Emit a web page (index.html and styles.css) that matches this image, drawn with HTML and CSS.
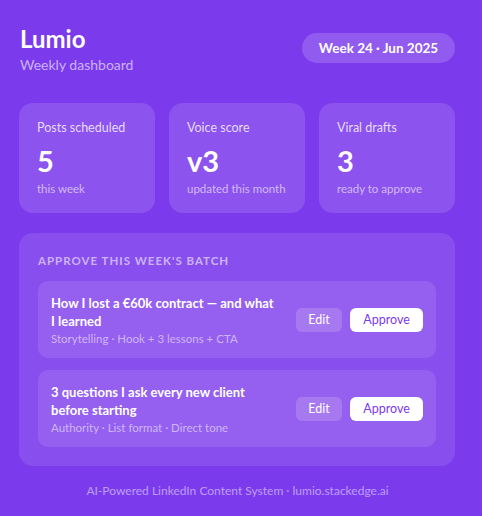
FILE: index.html
```html
<!DOCTYPE html>
<html lang="en">
<head>
<meta charset="utf-8">
<title>Lumio — Weekly dashboard</title>
<link rel="stylesheet" href="styles.css">
</head>
<body>
<main class="page">
  <header class="top">
    <div class="brand">
      <h1 class="brand-name">Lumio</h1>
      <p class="brand-sub">Weekly dashboard</p>
    </div>
    <span class="week-pill">Week 24 · Jun 2025</span>
  </header>

  <section class="stats">
    <div class="stat">
      <div class="stat-label">Posts scheduled</div>
      <div class="stat-value">5</div>
      <div class="stat-note">this week</div>
    </div>
    <div class="stat">
      <div class="stat-label">Voice score</div>
      <div class="stat-value">v3</div>
      <div class="stat-note">updated this month</div>
    </div>
    <div class="stat">
      <div class="stat-label">Viral drafts</div>
      <div class="stat-value">3</div>
      <div class="stat-note">ready to approve</div>
    </div>
  </section>

  <section class="batch">
    <h2 class="batch-title">Approve this week's batch</h2>
    <div class="post">
      <div class="post-text">
        <div class="post-title">How I lost a €60k contract — and what I learned</div>
        <div class="post-meta">Storytelling · Hook + 3 lessons + CTA</div>
      </div>
      <div class="post-actions">
        <button class="btn btn-edit">Edit</button>
        <button class="btn btn-approve">Approve</button>
      </div>
    </div>
    <div class="post">
      <div class="post-text">
        <div class="post-title">3 questions I ask every new client before starting</div>
        <div class="post-meta">Authority · List format · Direct tone</div>
      </div>
      <div class="post-actions">
        <button class="btn btn-edit">Edit</button>
        <button class="btn btn-approve">Approve</button>
      </div>
    </div>
  </section>

  <footer class="foot">AI-Powered LinkedIn Content System · lumio.stackedge.ai</footer>
</main>
</body>
</html>
```
FILE: styles.css
```css
* { box-sizing: border-box; }

html, body {
  margin: 0;
  height: 100%;
}

body {
  background: #7c3aed;
  color: #fff;
  font-family: "Lato", "Noto Sans", sans-serif;
}

.page {
  padding: 24px 27px 0 20px;
  width: 482px;
}

.top {
  display: flex;
  justify-content: space-between;
  align-items: flex-start;
}

.brand-name {
  margin: 0;
  font-size: 24px;
  line-height: 30px;
  font-weight: 700;
}

.brand-sub {
  margin: 2px 0 0;
  font-size: 14px;
  line-height: 18px;
  color: rgba(255, 255, 255, 0.62);
}

.week-pill {
  margin-top: 9px;
  height: 30px;
  width: 153px;
  justify-content: center;
  display: inline-flex;
  align-items: center;
  border-radius: 15px;
  background: rgba(255, 255, 255, 0.17);
  font-size: 13.5px;
  font-weight: 700;
}

.stats {
  margin-top: 29px;
  display: grid;
  grid-template-columns: repeat(3, 1fr);
  gap: 14px;
  margin-left: -1px;
}

.stat {
  height: 110px;
  border-radius: 14px;
  background: rgba(255, 255, 255, 0.13);
  padding: 17px 18px;
}

.stat-label {
  font-size: 12.5px;
  line-height: 16px;
  color: rgba(255, 255, 255, 0.8);
}

.stat-value {
  margin-top: 7px;
  font-size: 29px;
  line-height: 36px;
  font-weight: 700;
}

.stat-note {
  margin-top: 2px;
  font-size: 11.5px;
  line-height: 15px;
  color: rgba(255, 255, 255, 0.6);
}

.batch {
  margin-top: 20px;
  margin-left: -1px;
  border-radius: 14px;
  background: rgba(255, 255, 255, 0.1);
  padding: 20px 19px 19px;
  display: flex;
  flex-direction: column;
  gap: 12px;
}

.batch-title {
  margin: 0;
  font-size: 11.5px;
  line-height: 16px;
  font-weight: 700;
  letter-spacing: 1px;
  text-transform: uppercase;
  color: rgba(255, 255, 255, 0.58);
}

.post {
  height: 77px;
  border-radius: 10px;
  background: rgba(255, 255, 255, 0.1);
  padding: 0 13px;
  display: flex;
  align-items: center;
  gap: 6px;
}

.post-text {
  flex: 1;
  min-width: 0;
}

.post-title {
  max-width: 227px;
  font-size: 13px;
  line-height: 18px;
  font-weight: 700;
}

.post-meta {
  margin-top: 1px;
  font-size: 11.5px;
  line-height: 15px;
  color: rgba(255, 255, 255, 0.55);
}

.post-actions {
  display: flex;
  gap: 8px;
  flex-shrink: 0;
}

.btn {
  height: 24px;
  border: 0;
  border-radius: 6px;
  font-family: inherit;
  font-size: 12.5px;
  padding: 0;
}

.btn-edit {
  width: 46px;
  background: rgba(255, 255, 255, 0.16);
  color: #fff;
}

.btn-approve {
  width: 73px;
  background: #fff;
  color: #7c3aed;
}

.foot {
  margin-top: 17px;
  text-align: center;
  font-size: 12px;
  line-height: 16px;
  color: rgba(255, 255, 255, 0.5);
}
```
